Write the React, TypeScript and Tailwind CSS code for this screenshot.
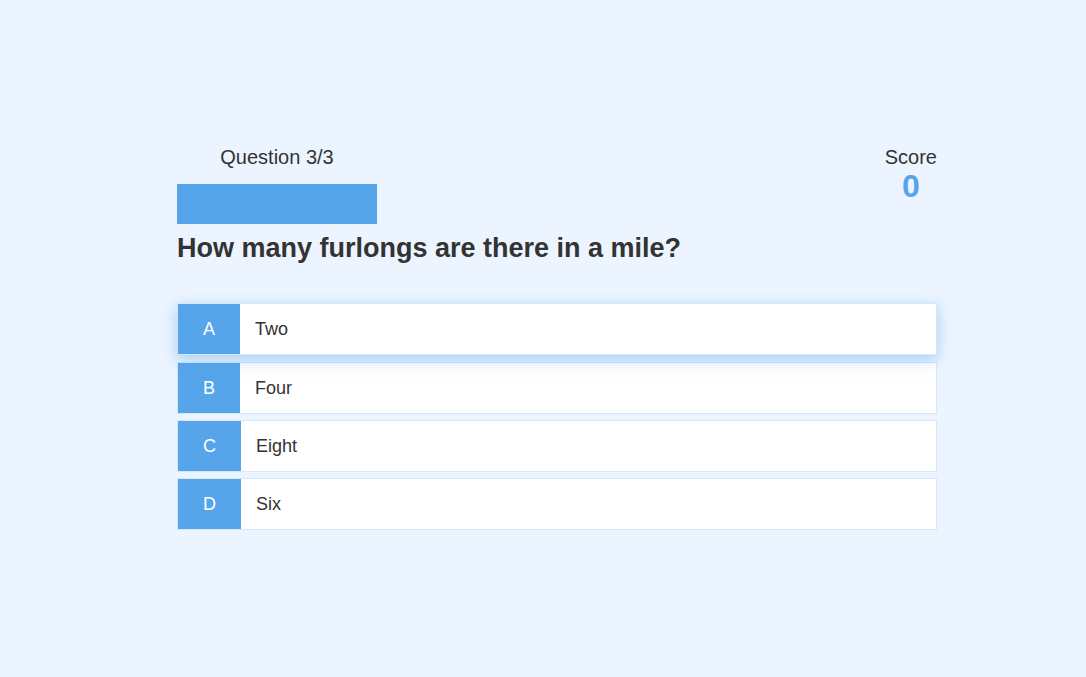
export default function App() {
  const choices = [
    { p: "A", t: "Two", hover: true },
    { p: "B", t: "Four" },
    { p: "C", t: "Eight" },
    { p: "D", t: "Six" },
  ];
  return (
    <div
      className="min-h-screen w-full bg-[#ecf5ff] pt-[146px] pl-[177px] text-[#333]"
      style={{ fontFamily: '"Liberation Sans", Arial, sans-serif' }}
    >
      <div className="w-[760px]">
        <div className="flex justify-between">
          <div className="flex w-[200px] flex-col">
            <p className="text-center text-[20px] leading-[23px]">Question 3/3</p>
            <div className="mt-[15px] h-[40px] w-[200px] bg-[#56a5eb]" />
          </div>
          <div className="flex flex-col items-center">
            <p className="text-[20px] leading-[23px]">Score</p>
            <p className="mt-[2px] text-[32px] font-bold leading-[30px] text-[#56a5eb]">0</p>
          </div>
        </div>
        <h2 className="mt-[9px] text-[27px] font-bold leading-[31px]">
          How many furlongs are there in a mile?
        </h2>
        <div className="mt-[40px] flex flex-col gap-[6px]">
          {choices.map((c) => (
            <div
              key={c.p}
              className={
                c.hover
                  ? "flex -translate-y-px border border-[rgba(86,165,235,0.25)] bg-white shadow-[0_4px_14px_0_rgba(86,165,235,0.5)]"
                  : "flex border border-[rgba(86,165,235,0.25)] bg-white"
              }
            >
              <div className="bg-[#56a5eb] px-[25px] py-[15px] text-[18px] leading-[20px] text-white">
                {c.p}
              </div>
              <div className="p-[15px] text-[18px] leading-[20px]">{c.t}</div>
            </div>
          ))}
        </div>
      </div>
    </div>
  );
}
